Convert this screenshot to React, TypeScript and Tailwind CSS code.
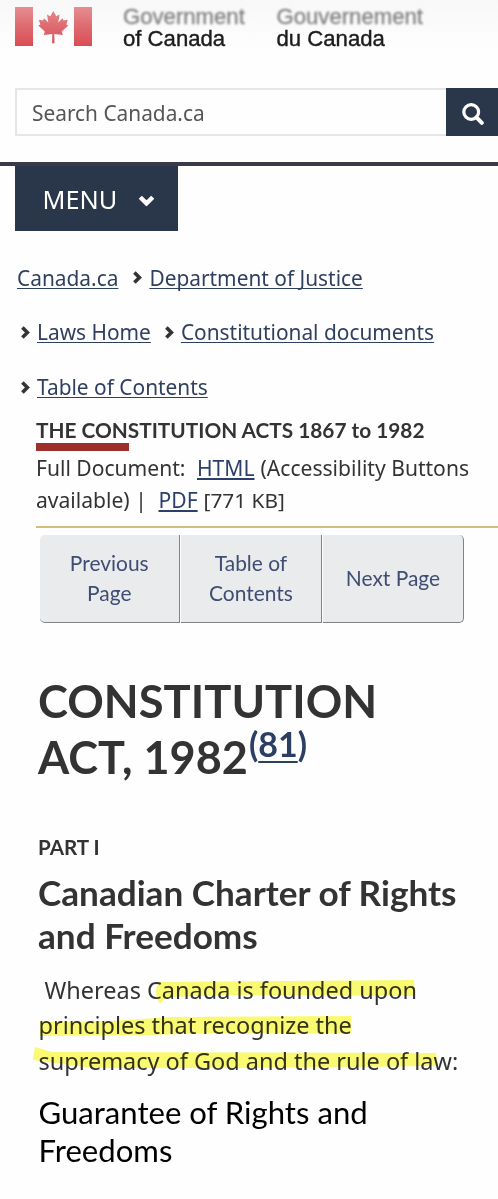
import type { ReactNode } from 'react';

function Chevron({ className }: { className: string }) {
  return (
    <svg viewBox="0 0 9 13" className={className} fill="none" stroke="currentColor" strokeWidth="3.6">
      <path d="M1.4 1.4 6.4 6.5 1.4 11.6" />
    </svg>
  );
}

function Crumb({ children }: { children: ReactNode }) {
  return (
    <a href="#" className="text-[#2f3f5f] underline decoration-[1.3px] underline-offset-[1.5px] [text-decoration-skip-ink:none]">
      {children}
    </a>
  );
}

function Flag() {
  return (
    <svg viewBox="0 0 90 48" className="absolute left-[10px] top-0 h-[48px] w-[90px]">
      <defs>
        <linearGradient id="flagRed" x1="0" y1="6" x2="0" y2="46" gradientUnits="userSpaceOnUse">
          <stop offset="0" stopColor="#e88f92" />
          <stop offset="0.5" stopColor="#dd6c70" />
          <stop offset="1" stopColor="#dc4c54" />
        </linearGradient>
        <filter id="soft" x="-20%" y="-20%" width="140%" height="140%">
          <feGaussianBlur stdDeviation="0.6" />
        </filter>
      </defs>
      <g fill="url(#flagRed)" filter="url(#soft)">
        <path d="M5 7h18v39H5zM64 7h18v39H64z" />
        <path d="M43.300 11l3 5.200 3.300-1.600-1.300 7.800 4.200-4.200 1 2.400 4.300-.8-1.500 4.700 2 1.100-6.500 5.900 1 3.600-8.500-1.100.2 9.300h-2.400l.2-9.300-8.500 1.100 1-3.600-6.500-5.900 2-1.100-1.500-4.700 4.300.8 1-2.400 4.200 4.200-1.300-7.800 3.300 1.600z" />
      </g>
    </svg>
  );
}

function Header() {
  return (
    <header className="relative h-[88px] bg-linear-to-b from-[#f8f8f8] to-[#fefefe] to-60% font-['Liberation_Sans',sans-serif] text-[22.15px]">
      <Flag />
      <div className="flex pl-[123px] pt-[5.500px] leading-[22.3px] whitespace-nowrap">
        <div className="w-[153.500px]">
          <div className="text-[#808080] blur-[0.8px] [-webkit-text-stroke:0.3px_#808080]">Government</div>
          <div className="text-[#1c1c1c] [-webkit-text-stroke:0.4px_#1c1c1c]">of Canada</div>
        </div>
        <div>
          <div className="text-[#808080] blur-[0.8px] [-webkit-text-stroke:0.3px_#808080]">Gouvernement</div>
          <div className="text-[#1c1c1c] [-webkit-text-stroke:0.4px_#1c1c1c]">du Canada</div>
        </div>
      </div>
    </header>
  );
}

function Search() {
  return (
    <div className="flex h-[48px] pl-[15px]">
      <div className="flex-1 border-2 border-r-0 border-[#e6e6e6] pl-[15px] text-[20.85px] leading-[46px] text-[#555]">
        Search Canada.ca
      </div>
      <button className="h-[48px] w-[52px] bg-[#2a374a] pl-[16px]" aria-label="Search">
        <svg viewBox="0 0 22 22" className="mt-[3px] h-[22px] w-[22px]" fill="none" stroke="#fff">
          <circle cx="9.200" cy="9" r="7.400" strokeWidth="3.200" />
          <path d="M14.500 14.300 19.800 19.800" strokeWidth="4" strokeLinecap="round" />
        </svg>
      </button>
    </div>
  );
}

export default function App() {
  return (
    <div className="h-[1199px] w-[498px] overflow-hidden bg-[#fefefe] font-['Noto_Sans',sans-serif] text-[#333]">
      <Header />
      <Search />

      <div className="mt-[26px] h-[4px] bg-[#3a3a4a]" />
      <button className="ml-[15px] flex h-[65px] w-[163px] items-center bg-[#2a374a] pl-[27.500px] pt-[2px] text-[25.3px] leading-[65px] text-white">
        MENU
        <Chevron className="ml-[23.500px] mt-[2px] h-[16px] w-[11px] rotate-90" />
      </button>

      <nav className="mt-[19.500px] text-[20.88px] leading-[54.8px] whitespace-nowrap">
        <div className="flex items-center pl-[17px]">
          <Crumb>Canada.ca</Crumb>
          <Chevron className="ml-[15px] mr-[7px] h-[13px] w-[9px]" />
          <Crumb>Department of Justice</Crumb>
        </div>
        <div className="flex items-center pl-[21px]">
          <Chevron className="mr-[7px] h-[13px] w-[9px]" />
          <Crumb>Laws Home</Crumb>
          <Chevron className="ml-[14px] mr-[7px] h-[13px] w-[9px]" />
          <Crumb>Constitutional documents</Crumb>
        </div>
        <div className="flex items-center pl-[21px]">
          <Chevron className="mr-[7px] h-[13px] w-[9px]" />
          <Crumb>Table of Contents</Crumb>
        </div>
      </nav>

      <main className="pl-[36px]">
        <div className="relative h-[37.600px] font-['Lato',sans-serif] text-[20.8px] leading-[30px] font-bold whitespace-nowrap">
          THE CONSTITUTION ACTS 1867 to 1982
          <div className="absolute left-0 top-[28px] h-[8px] w-[93px] bg-[#9d3029]" />
        </div>
        <div className="h-[74px] text-[21.08px] leading-[32px] whitespace-nowrap">
          <div className="flex">
            <span className="w-[161px]">Full Document:</span>
            <a href="#" className="mr-[6px] text-[#2b3f6b] underline decoration-[1.5px] underline-offset-[1.5px]">HTML</a>
            <span>(Accessibility Buttons</span>
          </div>
          <div className="flex">
            <span className="w-[122.500px]">available) |</span>
            <a href="#" className="mr-[6px] text-[#2b3f6b] underline decoration-[1.5px] underline-offset-[1.5px]">PDF</a>
            <span className="text-[20.8px]">[771 KB]</span>
          </div>
        </div>
        <div className="h-[2px] bg-[#d3bd7c]" />

        <div className="ml-[3.500px] mt-[7px] flex h-[88px] w-[425px] gap-px text-center font-['Lato',sans-serif] text-[20.95px] leading-[30px] text-[#3f4d72]">
          <a href="#" className="flex w-[140.500px] items-center justify-center rounded-l-[5px] border-r border-b border-[#7f8388] bg-[#e9ebed] pb-px">
            Previous<br />Page
          </a>
          <a href="#" className="flex w-[141px] items-center justify-center border-r border-b border-[#7f8388] bg-[#e9ebed] pb-px">
            Table of<br />Contents
          </a>
          <a href="#" className="flex w-[141px] items-center justify-center rounded-r-[5px] border-r border-b border-[#7f8388] bg-[#e9ebed] pb-px">
            Next Page
          </a>
        </div>

        <div className="pl-[2px] font-['Lato',sans-serif] font-bold whitespace-nowrap">
          <h1 className="mt-[50px] h-[112px] text-[45.3px] leading-[56px]">
            CONSTITUTION
            <br />
            <span className="text-[45px]">ACT, 1982</span>
            <sup className="relative -top-[17.500px] ml-px align-baseline text-[34px] leading-none text-[#2b3f63]">
              (<a href="#" className="underline decoration-[2px] underline-offset-[4px]">81</a>)
            </sup>
          </h1>
          <div className="mt-[46.500px] text-[20.6px] leading-[30px]">PART I</div>
          <h2 className="mt-[9px] text-[35.15px] leading-[43px]">
            Canadian Charter of Rights
            <br />
            and Freedoms
          </h2>
        </div>

        <div className="relative mt-[16px] pl-[2.500px] text-[23.47px] leading-[35.3px] whitespace-nowrap">
          <div className="pl-[6px]">Whereas Canada is founded upon</div>
          <div>principles that recognize the</div>
          <div>supremacy of God and the rule of law:</div>
          <svg viewBox="0 0 424 106" className="pointer-events-none absolute -left-[4px] top-0 h-[106px] w-[424px] opacity-90 mix-blend-multiply">
            <g fill="#fbfa62">
              <path d="M126 11 Q121 20 128 31 L134 24 L200 22 L383 23 L382 7 L250 8 L128 9Z" />
              <path d="M8 49 L80 48 L140 44 L319 43 L319 60 L180 60 L120 62 L8 63Z" />
              <path d="M3 74 L20 79 L404 80 L406 93 L200 95 L60 95 L1 87Z" />
            </g>
          </svg>
        </div>

        <h3 className="mt-[15.500px] pl-[2.500px] font-['Lato',sans-serif] text-[31.1px] leading-[37.8px] whitespace-nowrap text-black">
          Guarantee of Rights and
          <br />
          Freedoms
        </h3>
      </main>
    </div>
  );
}
